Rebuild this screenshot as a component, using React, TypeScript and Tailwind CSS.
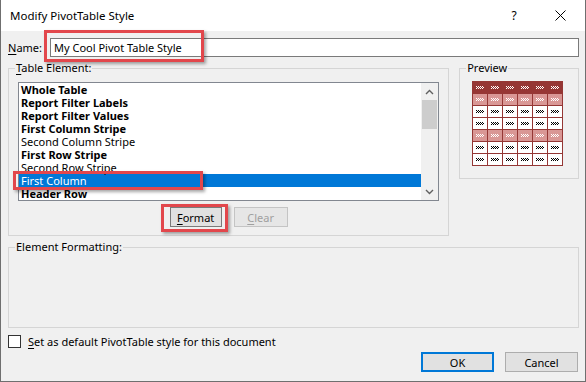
import React from "react";

const items = [
  { label: "Whole Table", bold: true },
  { label: "Report Filter Labels", bold: true },
  { label: "Report Filter Values", bold: true },
  { label: "First Column Stripe", bold: true },
  { label: "Second Column Stripe", bold: false },
  { label: "First Row Stripe", bold: true },
  { label: "Second Row Stripe", bold: false },
  { label: "First Column", bold: false, selected: true },
  { label: "Header Row", bold: true },
];

const rows = ["dark", "pink", "white", "white", "pink", "white", "white"];

function Dots({ light }: { light: boolean }) {
  const fill = light ? "#ffffff" : "#000000";
  const cells: React.ReactElement[] = [];
  for (let y = 0; y < 3; y++) {
    for (let x = 0; x < 8; x++) {
      if ((x + y) % 2 === 0) cells.push(<rect key={`${x}-${y}`} x={x} y={y} width="1" height="1" fill={fill} />);
    }
  }
  return (
    <svg width="8" height="3" viewBox="0 0 8 3">
      {cells}
    </svg>
  );
}

function PreviewTable() {
  return (
    <div className="grid grid-cols-[repeat(6,14px)] gap-px bg-[#953735] border border-[#953735] w-[91px]">
      {rows.map((r, i) =>
        [0, 1, 2, 3, 4, 5].map((c) => (
          <div
            key={`${i}-${c}`}
            className={
              "h-[11px] flex items-center justify-center " +
              (r === "dark" ? "bg-[#963634]" : r === "pink" ? "bg-[#d99795]" : "bg-white")
            }
          >
            <Dots light={r !== "white"} />
          </div>
        ))
      )}
    </div>
  );
}

function RedBox({ className }: { className: string }) {
  return (
    <div
      className={
        "absolute border-[3px] border-[#e2474c] shadow-[2px_2px_3px_rgba(0,0,0,0.35)] pointer-events-none " +
        className
      }
    />
  );
}

export default function App() {
  return (
    <div className="relative w-[586px] h-[382px] bg-[#f0f0f0] border-x border-b border-[#6f6f6f] font-['Noto_Sans',sans-serif] text-[11px] text-black leading-4 overflow-hidden">
      {/* title bar */}
      <div className="h-[31px] bg-white flex items-center pl-[9px] pr-[15px]">
        <span className="text-[11.5px]">Modify PivotTable Style</span>
        <span className="ml-auto w-[20px] text-center text-[12px]">?</span>
        <span className="ml-[26px] w-[20px] flex justify-center">
          <svg width="11" height="11" viewBox="0 0 11 11">
            <path d="M0.5 0.5 L10.5 10.5 M10.5 0.5 L0.5 10.5" stroke="#000" strokeWidth="1" />
          </svg>
        </span>
      </div>

      {/* name row */}
      <div className="flex items-center mt-[7px] pl-[7px] pr-[6px]">
        <label className="w-[42px]">
          <span className="underline underline-offset-2">N</span>ame:
        </label>
        <div className="flex-1 h-[19px] border border-[#7a7a7a] bg-white pl-[3px] flex items-center">
          My Cool Pivot Table Style
        </div>
      </div>

      {/* groups row */}
      <div className="flex items-start gap-[10px] mt-[3px] pl-[7px] pr-[6px]">
        <fieldset className="w-[442px] border border-[#d5d5d5]">
          <legend className="ml-[6px] px-[1px] leading-4">
            <span className="underline underline-offset-2">T</span>able Element:
          </legend>
          <div className="px-[9px] pb-[8px]">
            <div className="mt-[6px] h-[119px] border border-[#828790] bg-white flex">
              <div className="flex-1 overflow-hidden">
                {items.map((it) => (
                  <div
                    key={it.label}
                    className={
                      "h-[13px] leading-[13px] pl-[2px] whitespace-nowrap " +
                      (it.bold ? "font-bold " : "") +
                      (it.selected ? "bg-[#0078d7] text-white" : "")
                    }
                  >
                    {it.label}
                  </div>
                ))}
              </div>
              <div className="w-[17px] bg-[#f0f0f0] flex flex-col">
                <div className="h-[17px] flex items-center justify-center">
                  <svg width="9" height="6" viewBox="0 0 9 6">
                    <path d="M1 5 L4.5 1.5 L8 5" stroke="#606060" strokeWidth="1.4" fill="none" />
                  </svg>
                </div>
                <div className="flex-1">
                  <div className="h-[29px] mx-[1px] bg-[#cdcdcd]" />
                </div>
                <div className="h-[17px] flex items-center justify-center">
                  <svg width="9" height="6" viewBox="0 0 9 6">
                    <path d="M1 1 L4.5 4.5 L8 1" stroke="#606060" strokeWidth="1.4" fill="none" />
                  </svg>
                </div>
              </div>
            </div>
            <div className="mt-[6px] flex justify-center gap-[12px]">
              <button className="w-[52px] h-[20px] border border-[#7a7a7a] bg-[#e1e1e1] leading-none">
                <span className="underline underline-offset-2">F</span>ormat
              </button>
              <button className="w-[54px] h-[20px] border border-[#c4c4c4] bg-[#e6e6e6] text-[#a0a0a0] leading-none">
                <span className="underline underline-offset-2">C</span>lear
              </button>
            </div>
          </div>
        </fieldset>

        <fieldset className="w-[120px] border border-[#d5d5d5]">
          <legend className="ml-[6px] px-[1px] leading-4">Preview</legend>
          <div className="pl-[12px] pt-[5px] pb-[12px]">
            <PreviewTable />
          </div>
        </fieldset>
      </div>

      {/* element formatting */}
      <div className="mt-[3px] pl-[7px] pr-[6px]">
        <fieldset className="border border-[#d5d5d5]">
          <legend className="ml-[6px] px-[1px] leading-4">Element Formatting:</legend>
          <div className="h-[72px]" />
        </fieldset>
      </div>

      {/* checkbox */}
      <div className="mt-[7px] pl-[7px] flex items-center h-[13px]">
        <div className="w-[13px] h-[13px] border border-[#333333] bg-white" />
        <span className="ml-[7px]">
          <span className="underline underline-offset-2">S</span>et as default PivotTable style for this document
        </span>
      </div>

      {/* dialog buttons */}
      <div className="mt-[4px] flex justify-end gap-[11px] pr-[7px]">
        <button className="w-[73px] h-[20px] border-2 border-[#0078d7] bg-[#e1e1e1] leading-none">OK</button>
        <button className="w-[73px] h-[20px] border border-[#adadad] bg-[#e1e1e1] leading-none">Cancel</button>
      </div>

      {/* highlight annotations */}
      <RedBox className="left-[43px] top-[30px] w-[160px] h-[32px]" />
      <RedBox className="left-[12px] top-[171px] w-[190px] h-[19px]" />
      <RedBox className="left-[160px] top-[204px] w-[67px] h-[28px]" />
    </div>
  );
}
